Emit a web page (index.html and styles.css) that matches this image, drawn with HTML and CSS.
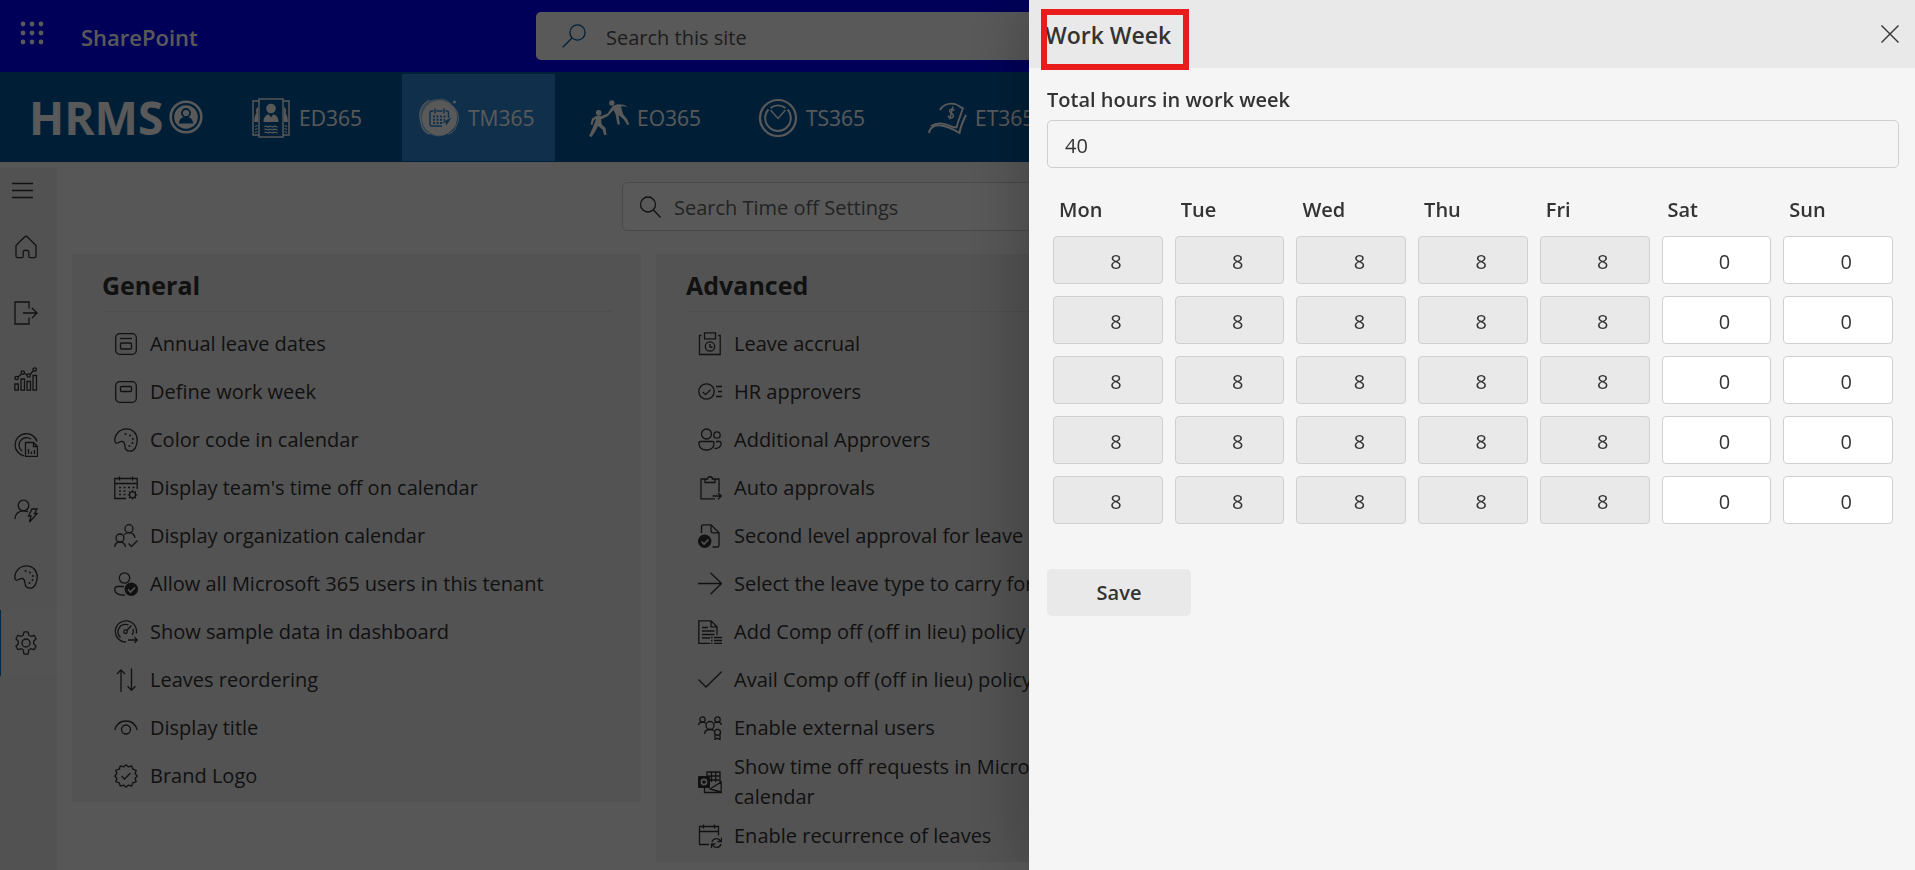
FILE: index.html
```html
<!DOCTYPE html>
<html lang="en">
<head>
<meta charset="utf-8">
<title>Time off Settings - Work Week</title>
<link rel="stylesheet" href="styles.css">
</head>
<body>
<div class="page">
  <header class="suite">
    <button class="waffle" aria-label="App launcher">
      <svg viewBox="0 0 24 24"><g fill="currentColor"><circle cx="3" cy="3" r="2.400"/><circle cx="12" cy="3" r="2.400"/><circle cx="21" cy="3" r="2.400"/><circle cx="3" cy="12" r="2.400"/><circle cx="12" cy="12" r="2.400"/><circle cx="21" cy="12" r="2.400"/><circle cx="3" cy="21" r="2.400"/><circle cx="12" cy="21" r="2.400"/><circle cx="21" cy="21" r="2.400"/></g></svg>
    </button>
    <a class="suite-name" href="#">SharePoint</a>
    <label class="suite-search">
      <svg class="icon blue" viewBox="0 0 24 24"><circle cx="15.500" cy="8.500" r="7.600"/><path d="M10 14L.8 23.200"/></svg>
      <input type="text" placeholder="Search this site" aria-label="Search this site">
    </label>
  </header>

  <nav class="apps">
    <a class="logo" href="#"><span>HRMS</span>
      <svg viewBox="0 0 34 34"><circle cx="17" cy="17" r="15.300" fill="none" stroke="currentColor" stroke-width="2.600"/><circle cx="17" cy="17" r="11.800" fill="currentColor"/><path d="M10 23.500c0-5 3-6.500 7-6.500s7 1.500 7 6.500z" fill="#005a9e"/><circle cx="17" cy="13" r="4" fill="currentColor" stroke="#005a9e" stroke-width="1.800"/></svg>
    </a>
    <a class="app" href="#">
      <svg viewBox="0 0 40 40"><g fill="none" stroke="currentColor" stroke-width="1.400"><rect x="8" y="1" width="24" height="38"/><path d="M8 3H2v34h6M32 3h6v34h-6"/></g><g fill="currentColor"><circle cx="20" cy="10.500" r="4.800"/><path d="M12.500 24c0-5 2.500-7.500 5.500-7.500l2 3 2-3c3 0 5.500 2.500 5.500 7.500z"/><path d="M7 9c-2 1-2.500 4-1.500 6.500C4 17 3.200 19 3.200 24H7zM33 9c2 1 2.500 4 1.500 6.500 1.500 1.500 2.300 3.500 2.300 8.500H33z"/></g><path d="M13.500 28.500c1.500-1.500 3 1.500 4.500 0s3 1.500 4.500 0 3 1.500 4 0M13.500 31.500c1.500-1.500 3 1.500 4.500 0s3 1.500 4.500 0 3 1.500 4 0M13.500 34.500c1.500-1.500 3 1.500 4.500 0s3 1.500 4.500 0 3 1.500 4 0M4 28.500l2.500-1M4 31.500l2.500-1M4 34.500l2.500-1M33.500 27.500l2.500 1M33.500 30.500l2.500 1M33.500 33.500l2.500 1" fill="none" stroke="currentColor" stroke-width="1.300"/></svg>
      <span>ED365</span></a>
    <a class="app active" href="#">
      <svg viewBox="0 0 42 40"><path d="M20 1c6-1 11 2 14 7 4 5 6 10 3 16-1 5-4 9-9 11-5 5-12 4-17 1-6 0-8-5-9-10C-1 19 0 9 7 4c4-2 9-3 13-3z" fill="currentColor" opacity=".55"/><circle cx="20.500" cy="20" r="17.500" fill="currentColor"/><path d="M10 2C2 7-1 14 2 24c0 5 3 11 9 12M34 8c6 7 7 14 3 20-1 5-4 7-8 8" fill="none" stroke="currentColor" stroke-width="1"/><circle cx="35.500" cy="4" r="1.600" fill="currentColor"/><g fill="none" stroke="#2b88d8" stroke-width="1.500"><path d="M23 28H12.500c-1 0-1.500-.5-1.500-1.500V14.500c0-1 .5-1.500 1.500-1.500h2M17.500 13h6M26.500 13h1.500c1 0 1.500.5 1.500 1.500V20M16 10.500v5M25 10.500v5"/><path d="M14 18.500h13M14 21.700h12M14 24.900h9" stroke-dasharray="2 1.500" stroke-width="2"/></g><path d="M32.500 19.500l-5 8-.8-3-4.200.5 5-3z" fill="#2b88d8"/></svg>
      <span>TM365</span></a>
    <a class="app" href="#">
      <svg viewBox="0 0 40 40"><g fill="currentColor"><circle cx="9.700" cy="14.700" r="2.800"/><circle cx="22.800" cy="5" r="2.700"/><path d="M7 18c2-1 4-.5 5.500 0l6-2.500L23 9c2-2 5-3 8-2.500 3-.5 6 .5 7.500 3-2.500-1.500-4.500-1.500-6.500-1l2 7.500 4 5 2.300 5.500-2 .5-3.500-5.500-5.300-4.500 1.500 9.500h-2.500L26.500 16l-2-4-5.500 6-7 3.500.8 5 3.700 3.500 1 7h-2.300l-1.700-5.500-4.500-3.500-2.500 5-4 6-2.500-1 3-6.500L7.200 21 5 22l-1.700 5-1.800-.5L3 20.500z"/></g></svg>
      <span>EO365</span></a>
    <a class="app" href="#">
      <svg viewBox="0 0 40 40"><g fill="none" stroke="currentColor"><circle cx="20" cy="20" r="18" stroke-width="2.200"/><path d="M10.500 11.500a12.800 12.800 0 1 0 19 0M12.500 10a13 13 0 0 1 15 0" stroke-width="2"/><path d="M12.500 12l7.500 8.500 7.500-8.500" stroke-width="1.400"/></g></svg>
      <span>TS365</span></a>
    <a class="app" href="#">
      <svg viewBox="0 0 40 40"><g fill="none" stroke="currentColor" stroke-linejoin="round"><path d="M2 35c1-6 6-8.500 12-7.500 6 .5 12 3.500 18.500 7.500 1-7 4-13 6.500-18" stroke-width="2"/><path d="M4 28c6-4 12-3 17-1 3 1.500 6 2.500 8.500 2.500 1.500-6 4-12 6.500-19.500-3 0-4-3-8-4-6-1-12 1-15 6" stroke-width="1.800"/></g><path d="M27.500 12.500c-2-2-5-1.500-5 .5s4.500 2.500 4 5-4 2.500-5.500 0M26 8.500l-3.500 13" fill="none" stroke="currentColor" stroke-width="1.500"/></svg>
      <span>ET365</span></a>
  </nav>

  <div class="body">
    <aside class="rail">
      <button class="menu" aria-label="Menu"><svg class="icon" viewBox="0 0 24 24"><path d="M1 4.500h21M1 11.500h21M1 18.500h21"/></svg></button>
      <a href="#" aria-label="Home"><svg class="icon" viewBox="0 0 24 24"><path d="M2 10.500L10.500 2c1-1 2-1 3 0L22 10.500V21c0 1-.7 1.700-1.700 1.700h-4c-1 0-1.500-.6-1.500-1.500v-4.500c0-.8-.5-1.200-1.200-1.200h-3.200c-.7 0-1.200.4-1.200 1.200v4.500c0 .9-.5 1.500-1.500 1.500h-4C2.700 22.700 2 22 2 21z"/></svg></a>
      <a href="#" aria-label="Requests"><svg class="icon" viewBox="0 0 24 24"><path d="M15 7.500V1H1v22h14v-6.500M9 12h14M18 7l5 5-5 5"/></svg></a>
      <a href="#" aria-label="Analytics"><svg class="icon" viewBox="0 0 24 24"><path d="M.8 17h3.500v6.200H.8zM7 12h3.500v11.200H7zM13 14.500h3.500v8.700H13zM19 8.500h3.500v14.700H19zM4 10l3.300-2.800M10.500 6.500l2.700 1.500M16 7.500l3.500-4"/><circle cx="2.600" cy="11" r="1.700"/><circle cx="8.800" cy="5.500" r="1.700"/><circle cx="14.700" cy="8.500" r="1.700"/><circle cx="20.700" cy="2.500" r="1.700"/></svg></a>
      <a href="#" aria-label="Reports"><svg class="icon" viewBox="0 0 24 24"><path d="M10 22.800A11.200 11.200 0 1 1 23 8.500M8 18a7.300 7.300 0 0 1 9-11.800M11.500 9.500h8l4 4v10h-12zM19.500 9.500v4h4M14.500 16v5M17.500 18.500V21M20.500 17v4"/></svg></a>
      <a href="#" aria-label="Delegates"><svg class="icon" viewBox="0 0 24 24"><circle cx="9.500" cy="6.500" r="5.300"/><path d="M1 20c0-5 3.500-8.200 8.500-8.200 1.800 0 3 .3 4.500 1M18 10h5l-2.500 4.500h2.700L15.500 23l1.500-6h-2.500z"/></svg></a>
      <a href="#" aria-label="Theme"><svg class="icon" viewBox="0 0 24 24"><path d="M.8 12.500C.8 6 6 .8 12.500.8c6.300 0 10.700 4.700 10.700 11.200 0 6-2.700 11.200-7 11.200-3.200 0-5-2-5.200-4.700-.2-3-.7-4.500-2.500-5-2-.5-3 .8-4.700 1.500-1.700.5-3-.5-3-2.500z"/><g class="dots"><circle cx="11.500" cy="6" r="1"/><circle cx="16" cy="7.500" r="1"/><circle cx="18.800" cy="11" r="1"/><circle cx="18.500" cy="15" r="1"/><circle cx="15.500" cy="18" r="1"/></g></svg></a>
      <a class="current" href="#" aria-label="Settings"><svg class="icon" viewBox="0 0 24 24"><circle cx="12" cy="12" r="4"/><path d="M10 .8h4l.8 3.400 2 1.100 3.300-1 2 3.500-2.400 2.400v2.600l2.400 2.400-2 3.500-3.300-1-2 1.100-.8 4.400h-4l-.8-4.400-2-1.100-3.300 1-2-3.500 2.400-2.400v-2.600L1.900 7.800l2-3.500 3.300 1 2-1.100z" stroke-linejoin="round"/></svg></a>
    </aside>

    <main class="main">
      <label class="finder">
        <svg class="icon" viewBox="0 0 24 24"><circle cx="10" cy="9.500" r="7.500"/><path d="M15.500 15l7 7.500"/></svg>
        <input type="text" placeholder="Search Time off Settings" aria-label="Search Time off Settings">
      </label>
      <div class="cards">
        <section class="card">
          <h2>General</h2>
          <ul>
            <li><a href="#"><svg class="icon" viewBox="0 0 24 24"><rect x="1.700" y="1.700" width="20.600" height="20.600" rx="4"/><path d="M6 6.500h12"/><rect x="6.500" y="11" width="11" height="6" rx="1"/></svg>Annual leave dates</a></li>
            <li><a href="#"><svg class="icon" viewBox="0 0 24 24"><rect x="1.700" y="1.700" width="20.600" height="20.600" rx="4"/><rect x="6.500" y="6.500" width="11" height="5" rx="1"/></svg>Define work week</a></li>
            <li><a href="#"><svg class="icon" viewBox="0 0 24 24"><path d="M.8 12.500C.8 6 6 .8 12.500.8c6.300 0 10.700 4.700 10.700 11.200 0 6-2.700 11.200-7 11.200-3.200 0-5-2-5.200-4.700-.2-3-.7-4.500-2.500-5-2-.5-3 .8-4.700 1.500-1.700.5-3-.5-3-2.500z"/><g class="dots"><circle cx="11.500" cy="6" r="1"/><circle cx="16" cy="7.500" r="1"/><circle cx="18.800" cy="11" r="1"/><circle cx="18.500" cy="15" r="1"/><circle cx="15.500" cy="18" r="1"/></g></svg>Color code in calendar</a></li>
            <li><a href="#"><svg class="icon" viewBox="0 0 24 24"><path d="M12 22.500H.8v-20h22.400V13M.8 7.500h22.400M5.500.5v4M18.500.5v4"/><path d="M5 11.500h2m2.500 0h2m2.500 0h2m2.500 0h2M5 15h2m2.500 0h2M5 18.500h2m2.500 0h2"/><circle cx="18.500" cy="18.800" r="3"/><path d="M18.500 14v1.800M18.500 21.800v1.800M13.700 18.800h1.800M21.500 18.800h1.800M15.100 15.400l1.300 1.300M20.600 20.900l1.300 1.300M15.100 22.200l1.300-1.300M20.600 16.700l1.300-1.300"/></svg>Display team's time off on calendar</a></li>
            <li><a href="#"><svg class="icon" viewBox="0 0 24 24"><circle cx="15" cy="4.700" r="4"/><circle cx="6" cy="14" r="4"/><path d="M.8 23c0-3 2-5 5.200-5s5 2 5.500 5M10 11c1-1.500 3-2.300 5-2.300 3.500 0 5.500 2.300 6 5.300M14.500 19.500l3 3 6-6"/></svg>Display organization calendar</a></li>
            <li><a href="#"><svg class="icon" viewBox="0 0 24 24"><circle cx="10.500" cy="6" r="5.200"/><path d="M11 23C5 23.500.8 21.500.8 17.500c0-1.500.8-3 2.500-3H10"/><circle class="solid" cx="17.300" cy="17.300" r="6.700"/><path class="knock" d="M14 17.500l2.500 2.500 4.500-4.500"/></svg>Allow all Microsoft 365 users in this tenant</a></li>
            <li><a href="#"><svg class="icon" viewBox="0 0 24 24"><path d="M12 22A10.600 10.600 0 1 1 22.300 13.500M6.500 17.500A7.500 7.500 0 0 1 14.500 5M19 9c.6 2 .3 4-.8 6M12.800 10.500L17.500 5.500M14 20h9M20.500 17.300L23.300 20l-2.800 2.800"/><circle cx="11.500" cy="11.700" r="1.800"/></svg>Show sample data in dashboard</a></li>
            <li><a href="#"><svg class="icon" viewBox="0 0 24 24"><path d="M7 24V2M3 6l4-4 4 4M17.500.5v21.800M13.500 18.300l4 4 4-4"/></svg>Leaves reordering</a></li>
            <li><a href="#"><svg class="icon" viewBox="0 0 24 24"><circle cx="12" cy="13.500" r="4.500"/><path d="M.8 14C2.500 8 7 5 12 5s9.500 3 11.200 9"/></svg>Display title</a></li>
            <li><a href="#"><svg class="icon" viewBox="0 0 24 24"><path d="M12 .8l2.500 2.100 3.100-1.100 1.200 3.400 3.400 1.200-1.100 3.100L23.200 12l-2.100 2.500 1.100 3.100-3.400 1.200-1.200 3.400-3.100-1.100L12 23.200l-2.500-2.100-3.100 1.100-1.200-3.400-3.400-1.200 1.100-3.100L.8 12l2.100-2.500-1.100-3.100 3.400-1.200 1.200-3.400 3.100 1.100z" stroke-linejoin="round"/><path d="M7.500 12l3 3 6-6"/></svg>Brand Logo</a></li>
          </ul>
        </section>
        <section class="card">
          <h2>Advanced</h2>
          <ul>
            <li><a href="#"><svg class="icon" viewBox="0 0 24 24"><path d="M3.500 3.500h-2v19h20.700v-19h-2M6.500.8h11v6h-11z"/><circle cx="12" cy="14.500" r="4.700"/><path d="M12 12v3h2.500"/></svg>Leave accrual</a></li>
            <li><a href="#"><svg class="icon" viewBox="0 0 24 24"><circle cx="8.500" cy="11.500" r="7.700"/><path d="M4.800 12l2.700 2.700 5-5M18 6.500h6M20 11.500h4M18 16.500h6"/></svg>HR approvers</a></li>
            <li><a href="#"><svg class="icon" viewBox="0 0 24 24"><circle cx="8.500" cy="6" r="5"/><circle cx="19" cy="7" r="3.200"/><path d="M2.500 13.500h12c1.200 0 1.800 1 1.600 2-.5 4.500-3.500 6.500-7.600 6.500S1.300 20 .9 15.500c-.1-1 .5-2 1.600-2zM18 13.500h3.500c1.200 0 1.800.8 1.700 2-.3 3.500-2.500 5-6.700 5"/></svg>Additional Approvers</a></li>
            <li><a href="#"><svg class="icon" viewBox="0 0 24 24"><path d="M17 22.800H3V3h4M17 3h4v13M7 3h2.500c0-3 5-3 5 0H17v3.500H7zM14.500 20h8.500M20 16.800l3.300 3.200L20 23.200"/></svg>Auto approvals</a></li>
            <li><a href="#"><svg class="icon" viewBox="0 0 24 24"><path d="M3.500 9V3c0-1.500.8-2.200 2-2.200H13l8 8V21c0 1.200-.8 2-2 2h-4.500M13 .8v6c0 1.200.7 2 2 2h6"/><circle class="solid" cx="6.700" cy="17.300" r="6.700"/><path class="knock" d="M3.500 17.500L6 20l4.500-4.500"/></svg>Second level approval for leave cancellation</a></li>
            <li><a href="#"><svg class="icon" viewBox="0 0 24 24"><path d="M0 11.500h23.500M12.500.8l11 10.700-11 10.700"/></svg>Select the leave type to carry forward</a></li>
            <li><a href="#"><svg class="icon" viewBox="0 0 24 24"><path d="M12 23.300H.8V.8H13l6 6V15M13 .8v6h6M4 7.500h6M4 11h12.500M4 14.500h12.500M4 18h8M13 17.500h1.500M13 20.500h1.500M13 23.300h1.500M16 17.500h8M16 20.500h8M16 23.300h8"/></svg>Add Comp off (off in lieu) policy</a></li>
            <li><a href="#"><svg class="icon" viewBox="0 0 24 24"><path d="M.5 11.500l7.500 7.500L23.800 3.500"/></svg>Avail Comp off (off in lieu) policy</a></li>
            <li><a href="#"><svg class="icon" viewBox="0 0 24 24"><circle cx="4.500" cy="3.500" r="2.700"/><circle cx="19.500" cy="3.500" r="2.700"/><circle cx="12" cy="9.500" r="4"/><path d="M.6 9c.3-2 2-2.800 3.900-2.800 1.300 0 2.500.4 3.300 1.200M23.400 9c-.3-2-2-2.800-3.900-2.800-1.300 0-2.500.4-3.300 1.200M6.500 18c.3-3 2.500-4.500 5.500-4.500 1.500 0 2.800.3 3.800 1.200"/><circle cx="19.500" cy="16.300" r="3"/><path d="M17 18.500v5l2.500-1.300 2.500 1.300v-5"/></svg>Enable external users</a></li>
            <li><a href="#"><svg class="icon" viewBox="0 0 24 24"><path d="M9 6V2h13v12M13.500 2v10M17.700 2v10M9 6h13M12 10h10M6.500 18v4.500h16.700V12L12 19l11 3"/><rect class="solid" x="0" y="6" width="12" height="12" rx="1"/><circle class="knock" cx="6" cy="12" r="2.600"/></svg>Show time off requests in Microsoft 365 Outlook calendar</a></li>
            <li><a href="#"><svg class="icon" viewBox="0 0 24 24"><path d="M11 20.500H1.500V2.500h19v9M1.500 7.500h19M5.500.5v4M16.500.5v4M14 18c1-4 7-4.500 8.500-1M23.500 13.500v4h-4M23 20c-1 4-7 4.500-8.500 1M13.500 24v-4h4"/></svg>Enable recurrence of leaves</a></li>
          </ul>
        </section>
      </div>
    </main>
  </div>
</div>

<div class="scrim"></div>

<section class="panel" role="dialog" aria-labelledby="panel-title">
  <header class="panel-head">
    <h1 id="panel-title">Work Week</h1>
    <button class="close" aria-label="Close"><svg viewBox="0 0 18 18"><path d="M.5.5l17 17M17.500.5l-17 17"/></svg></button>
    <span class="marker"></span>
  </header>
  <form class="panel-body">
    <label class="field-label" for="total">Total hours in work week</label>
    <input class="total" id="total" type="text" value="40" readonly>
    <table class="week">
      <thead><tr><th scope="col">Mon</th><th scope="col">Tue</th><th scope="col">Wed</th><th scope="col">Thu</th><th scope="col">Fri</th><th scope="col">Sat</th><th scope="col">Sun</th></tr></thead>
      <tbody>
        <tr><td><input class="work" value="8" aria-label="Week 1 Mon"></td><td><input class="work" value="8" aria-label="Week 1 Tue"></td><td><input class="work" value="8" aria-label="Week 1 Wed"></td><td><input class="work" value="8" aria-label="Week 1 Thu"></td><td><input class="work" value="8" aria-label="Week 1 Fri"></td><td><input value="0" aria-label="Week 1 Sat"></td><td><input value="0" aria-label="Week 1 Sun"></td></tr>
        <tr><td><input class="work" value="8" aria-label="Week 2 Mon"></td><td><input class="work" value="8" aria-label="Week 2 Tue"></td><td><input class="work" value="8" aria-label="Week 2 Wed"></td><td><input class="work" value="8" aria-label="Week 2 Thu"></td><td><input class="work" value="8" aria-label="Week 2 Fri"></td><td><input value="0" aria-label="Week 2 Sat"></td><td><input value="0" aria-label="Week 2 Sun"></td></tr>
        <tr><td><input class="work" value="8" aria-label="Week 3 Mon"></td><td><input class="work" value="8" aria-label="Week 3 Tue"></td><td><input class="work" value="8" aria-label="Week 3 Wed"></td><td><input class="work" value="8" aria-label="Week 3 Thu"></td><td><input class="work" value="8" aria-label="Week 3 Fri"></td><td><input value="0" aria-label="Week 3 Sat"></td><td><input value="0" aria-label="Week 3 Sun"></td></tr>
        <tr><td><input class="work" value="8" aria-label="Week 4 Mon"></td><td><input class="work" value="8" aria-label="Week 4 Tue"></td><td><input class="work" value="8" aria-label="Week 4 Wed"></td><td><input class="work" value="8" aria-label="Week 4 Thu"></td><td><input class="work" value="8" aria-label="Week 4 Fri"></td><td><input value="0" aria-label="Week 4 Sat"></td><td><input value="0" aria-label="Week 4 Sun"></td></tr>
        <tr><td><input class="work" value="8" aria-label="Week 5 Mon"></td><td><input class="work" value="8" aria-label="Week 5 Tue"></td><td><input class="work" value="8" aria-label="Week 5 Wed"></td><td><input class="work" value="8" aria-label="Week 5 Thu"></td><td><input class="work" value="8" aria-label="Week 5 Fri"></td><td><input value="0" aria-label="Week 5 Sat"></td><td><input value="0" aria-label="Week 5 Sun"></td></tr>
      </tbody>
    </table>
    <button class="save" type="button">Save</button>
  </form>
</section>
</body>
</html>
```
FILE: styles.css
```css
* { box-sizing: border-box; }

body {
  margin: 0;
  background: #fafafa;
  color: #333;
  font: 20px/30px "Open Sans", "Noto Sans", sans-serif;
}

a { color: inherit; text-decoration: none; }
h1, h2, ul { margin: 0; padding: 0; }
ul { list-style: none; }
input, button { font: inherit; color: inherit; }
button { border: 0; padding: 0; background: none; }
svg { flex: none; display: block; }

.page {
  display: flex;
  flex-direction: column;
  height: 100vh;
  overflow: hidden;
}

.icon {
  width: 24px;
  height: 24px;
  fill: none;
  stroke: currentColor;
  stroke-width: 1.3;
}
.icon .dots, .icon .solid { fill: currentColor; stroke: none; }
.icon .knock { stroke: #f0f0f0; stroke-width: 1.6; }
.icon.blue { stroke: #005a9e; }

/* suite bar */
.suite {
  display: flex;
  flex: none;
  align-items: center;
  height: 72px;
  padding-left: 20px;
  background: #0000ff;
  color: #fff;
}
.waffle { margin-bottom: 6px; color: #fff; }
.waffle svg { width: 24px; height: 24px; }
.suite-name {
  flex: none;
  width: 492px;
  padding: 2px 0 0 37px;
  font-size: 22px;
  font-weight: 600;
}
.suite-search {
  display: flex;
  flex: none;
  align-items: center;
  gap: 20px;
  width: 44%;
  height: 48px;
  padding: 0 26px;
  border-radius: 5px;
  background: #fff;
}
.suite-search input, .finder input {
  flex: 1;
  border: 0;
  background: none;
  padding: 3px 0 0;
}
.suite-search input::placeholder { color: #555; }
.finder input::placeholder { color: #666; }

/* app bar */
.apps {
  display: flex;
  flex: none;
  gap: 16px;
  height: 90px;
  padding: 2px 0 1px 29px;
  background: #005a9e;
  color: #fff;
}
.logo {
  display: flex;
  align-items: center;
  gap: 6px;
  width: 188px;
  padding-bottom: 2px;
  font-size: 46px;
  font-weight: 700;
}
.logo svg { width: 34px; height: 34px; }
.app {
  display: flex;
  flex: none;
  align-items: center;
  gap: 7px;
  width: 153px;
  padding-left: 17px;
  font-size: 21px;
}
.app svg { width: 42px; height: 40px; }
.app.active { background: #2b88d8; }

/* body */
.body { display: flex; flex: 1; }
.rail {
  display: flex;
  flex: none;
  flex-direction: column;
  width: 57px;
  margin-top: 6px;
  background: #ebebeb;
}
.menu { height: 46px; padding-left: 11px; }
.rail a {
  display: flex;
  align-items: center;
  height: 66px;
  padding-left: 13px;
  border-left: 1px solid transparent;
}
.rail a.current { border-left-color: #0078d4; background: #ededed; }
.main { flex: 1; padding: 20px 106px 0 15px; }
.finder {
  display: flex;
  align-items: center;
  gap: 12px;
  width: 728px;
  height: 49px;
  margin: 0 auto 23px 550px;
  padding-left: 15px;
  border: 1px solid #d0d0d0;
  border-radius: 5px;
  background: #fff;
}
.cards {
  display: grid;
  grid-template-columns: repeat(3, 1fr);
  align-items: start;
  gap: 15px;
}
.card { padding: 14px 30px 2px; background: #ededed; }
.card h2 {
  height: 44px;
  padding-top: 2px;
  border-bottom: 1px solid #ddd;
  font-size: 25px;
  line-height: 30px;
}
.card ul { padding: 8px 0 0 12px; }
.card li a {
  display: flex;
  align-items: center;
  gap: 12px;
  min-height: 48px;
}

.scrim {
  position: fixed;
  inset: 0;
  background: rgba(0, 0, 0, 0.65);
}

/* side panel */
.panel {
  position: fixed;
  top: 0;
  right: 0;
  bottom: 0;
  left: 1029px;
  background: #f5f5f5;
  box-shadow: 0 0 64px rgba(0, 0, 0, 0.3);
}
.panel-head {
  position: relative;
  display: flex;
  align-items: center;
  justify-content: space-between;
  height: 68px;
  padding: 0 16px;
  background: #e9e9e9;
}
.panel-head h1 { padding-top: 2px; font-size: 23px; font-weight: 600; }
.close svg {
  width: 18px;
  height: 18px;
  fill: none;
  stroke: #333;
  stroke-width: 1.4;
}
.marker {
  position: absolute;
  top: 9px;
  left: 12px;
  width: 148px;
  height: 61px;
  border: 6px solid #e81c1c;
}
.panel-body { padding: 17px 16px 0 18px; }
.field-label { display: block; margin-bottom: 5px; font-weight: 600; }
.total {
  display: block;
  width: 100%;
  height: 48px;
  padding: 2px 17px 0;
  border: 1px solid #d0d0d0;
  border-radius: 5px;
  background: #f5f5f5;
}
.week {
  width: 100%;
  margin-top: 20px;
  border-collapse: collapse;
  table-layout: fixed;
}
.week th {
  height: 42px;
  padding: 2px 12px 0;
  font-weight: 600;
  text-align: left;
}
.week td { padding: 6px; }
.week input {
  display: block;
  width: 100%;
  height: 48px;
  padding: 2px 40px 0 8px;
  border: 1px solid #d0d0d0;
  border-radius: 4px;
  background: #fff;
  text-align: right;
}
.week .work { background: #e9e9e9; }
.save {
  width: 144px;
  height: 47px;
  margin-top: 39px;
  border-radius: 5px;
  background: #e9e9e9;
  font-weight: 600;
}
```
